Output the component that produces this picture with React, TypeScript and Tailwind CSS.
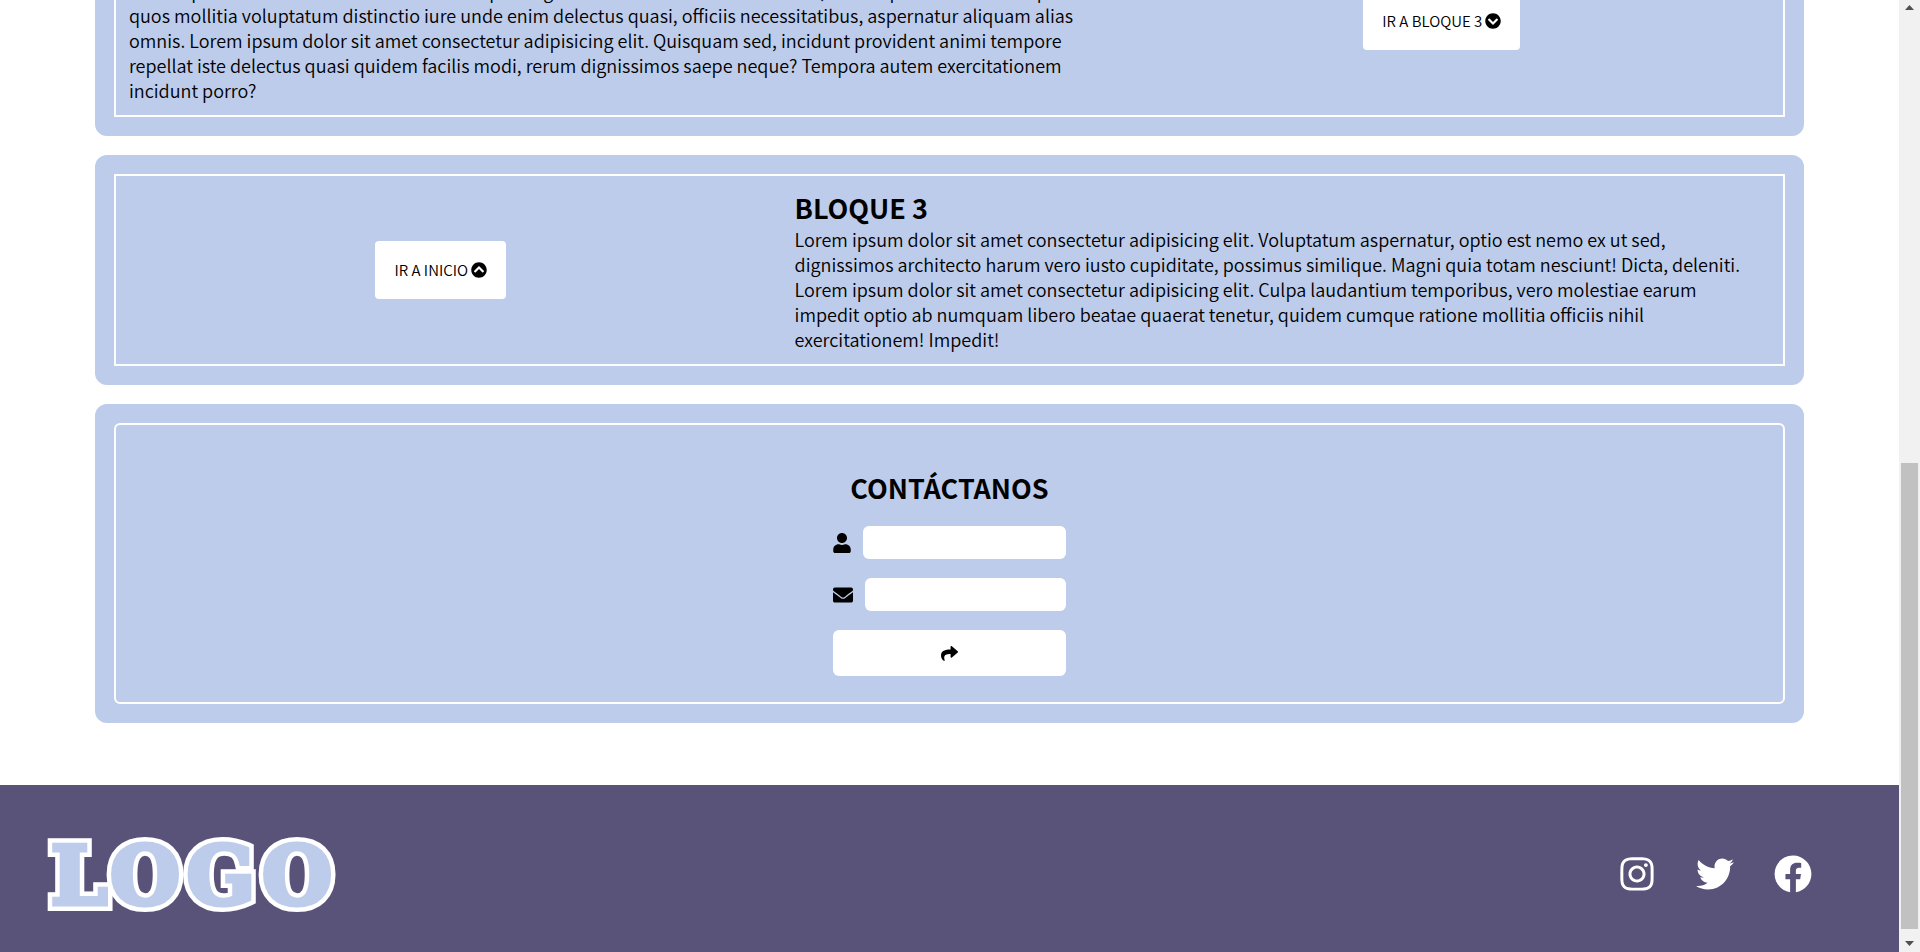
import React from "react";
import { FaUser, FaEnvelope, FaShare, FaChevronCircleDown, FaChevronCircleUp, FaInstagram, FaTwitter, FaFacebook } from "react-icons/fa";

function Card({ children, rounded = false, className = "" }: { children: React.ReactNode; rounded?: boolean; className?: string }) {
  return (
    <section className="rounded-xl bg-[#bdccea] p-[19px]">
      <div className={`border-2 border-white ${rounded ? "rounded-md" : ""} ${className}`}>{children}</div>
    </section>
  );
}

const logoLetters = [
  { char: "L", x: 32 },
  { char: "O", x: 98 },
  { char: "G", x: 174 },
  { char: "O", x: 250 },
];

function Logo() {
  return (
    <svg viewBox="0 0 290 80" className="h-20 w-[290px] overflow-visible" role="img" aria-label="LOGO">
      <g fontFamily="DejaVu Serif" fontWeight="700" fontSize="80" textAnchor="middle" strokeMiterlimit="4">
        {logoLetters.map(({ char, x }) => (
          <text key={`outline-${x}`} x={x} y="70" fill="#fff" stroke="#fff" strokeWidth="14">{char}</text>
        ))}
        {logoLetters.map(({ char, x }) => (
          <text key={`face-${x}`} x={x} y="70" fill="#bdccea" stroke="#bdccea" strokeWidth="5" aria-hidden="true">{char}</text>
        ))}
      </g>
    </svg>
  );
}

export default function App() {
  return (
    <div className="flex h-screen overflow-hidden bg-white font-['Noto_Sans_CJK_JP','Noto_Sans_CJK_SC',sans-serif] text-black">
      <div className="flex h-full min-w-0 flex-1 flex-col justify-end overflow-hidden">
        <main className="flex flex-col gap-[19px] px-[5%] pb-[62px]">
          <Card className="flex items-center px-[13px] py-3">
            <div className="flex-1">
              <h2 className="text-[27px] font-bold leading-[39px]">BLOQUE 2</h2>
              <p className="text-[18px] font-[350] leading-[25px]">
                Lorem ipsum dolor sit amet consectetur adipisicing elit. Ullam necessitatibus omnis, nihil cupiditate illum tempora<br />
                quos mollitia voluptatum distinctio iure unde enim delectus quasi, officiis necessitatibus, aspernatur aliquam alias<br />
                omnis. Lorem ipsum dolor sit amet consectetur adipisicing elit. Quisquam sed, incidunt provident animi tempore<br />
                repellat iste delectus quasi quidem facilis modi, rerum dignissimos saepe neque? Tempora autem exercitationem<br />
                incidunt porro?
              </p>
            </div>
            <div className="flex w-[40%] justify-center">
              <a href="#bloque3" className="flex items-center gap-[3px] rounded bg-white p-[19px] text-[15px] font-[350] leading-5">
                IR A BLOQUE 3 <FaChevronCircleDown className="size-4" />
              </a>
            </div>
          </Card>
          <Card className="flex items-center gap-[42px] px-[13px] py-3">
            <div className="flex w-[38%] justify-center">
              <a href="#inicio" className="flex items-center gap-[3px] rounded bg-white p-[19px] text-[15px] font-[350] leading-5">
                IR A INICIO <FaChevronCircleUp className="size-4" />
              </a>
            </div>
            <div id="bloque3" className="flex-1">
              <h2 className="text-[27px] font-bold leading-[39px]">BLOQUE 3</h2>
              <p className="text-[18px] font-[350] leading-[25px]">
                Lorem ipsum dolor sit amet consectetur adipisicing elit. Voluptatum aspernatur, optio est nemo ex ut sed,<br />
                dignissimos architecto harum vero iusto cupiditate, possimus similique. Magni quia totam nesciunt! Dicta, deleniti.<br />
                Lorem ipsum dolor sit amet consectetur adipisicing elit. Culpa laudantium temporibus, vero molestiae earum<br />
                impedit optio ab numquam libero beatae quaerat tenetur, quidem cumque ratione mollitia officiis nihil<br />
                exercitationem! Impedit!
              </p>
            </div>
          </Card>
          <Card rounded className="flex flex-col items-center pb-[26px] pt-[43px]">
            <h2 className="text-[27px] font-bold leading-[39px]">CONTÁCTANOS</h2>
            <form className="mt-[19px] flex w-[233px] flex-col gap-[19px]">
              <div className="flex items-center gap-3">
                <label htmlFor="nombre" aria-label="Nombre"><FaUser className="h-5 w-[18px]" /></label>
                <input id="nombre" type="text" className="h-[33px] min-w-0 flex-1 rounded-md bg-white px-2" />
              </div>
              <div className="flex items-center gap-3">
                <label htmlFor="correo" aria-label="Correo"><FaEnvelope className="size-5" /></label>
                <input id="correo" type="email" className="h-[33px] min-w-0 flex-1 rounded-md bg-white px-2" />
              </div>
              <button type="button" aria-label="Enviar" className="flex h-[46px] items-center justify-center rounded-md bg-white">
                <FaShare className="size-[17px]" />
              </button>
            </form>
          </Card>
        </main>
        <footer className="flex h-[167px] shrink-0 items-center justify-between bg-[#595279] pl-[47px] pr-[87px] pt-[10px]">
          <Logo />
          <nav className="flex items-center gap-10 text-white">
            <a href="#instagram" aria-label="Instagram"><FaInstagram className="size-[38px]" /></a>
            <a href="#twitter" aria-label="Twitter"><FaTwitter className="size-[38px]" /></a>
            <a href="#facebook" aria-label="Facebook"><FaFacebook className="size-[38px]" /></a>
          </nav>
        </footer>
      </div>
      <div className="flex w-[21px] shrink-0 flex-col items-center bg-[#f1f1f1]" aria-hidden="true">
        <svg viewBox="0 0 17 17" className="size-[17px]"><path d="M4 10h9L8.500 5z" fill="#505050" /></svg>
        <div className="flex-1" />
        <div className="h-[49%] w-[17px] bg-[#c1c1c1]" />
        <svg viewBox="0 0 17 23" className="h-[23px] w-[17px]"><path d="M4 12h9l-4.500 5z" fill="#505050" /></svg>
      </div>
    </div>
  );
}
